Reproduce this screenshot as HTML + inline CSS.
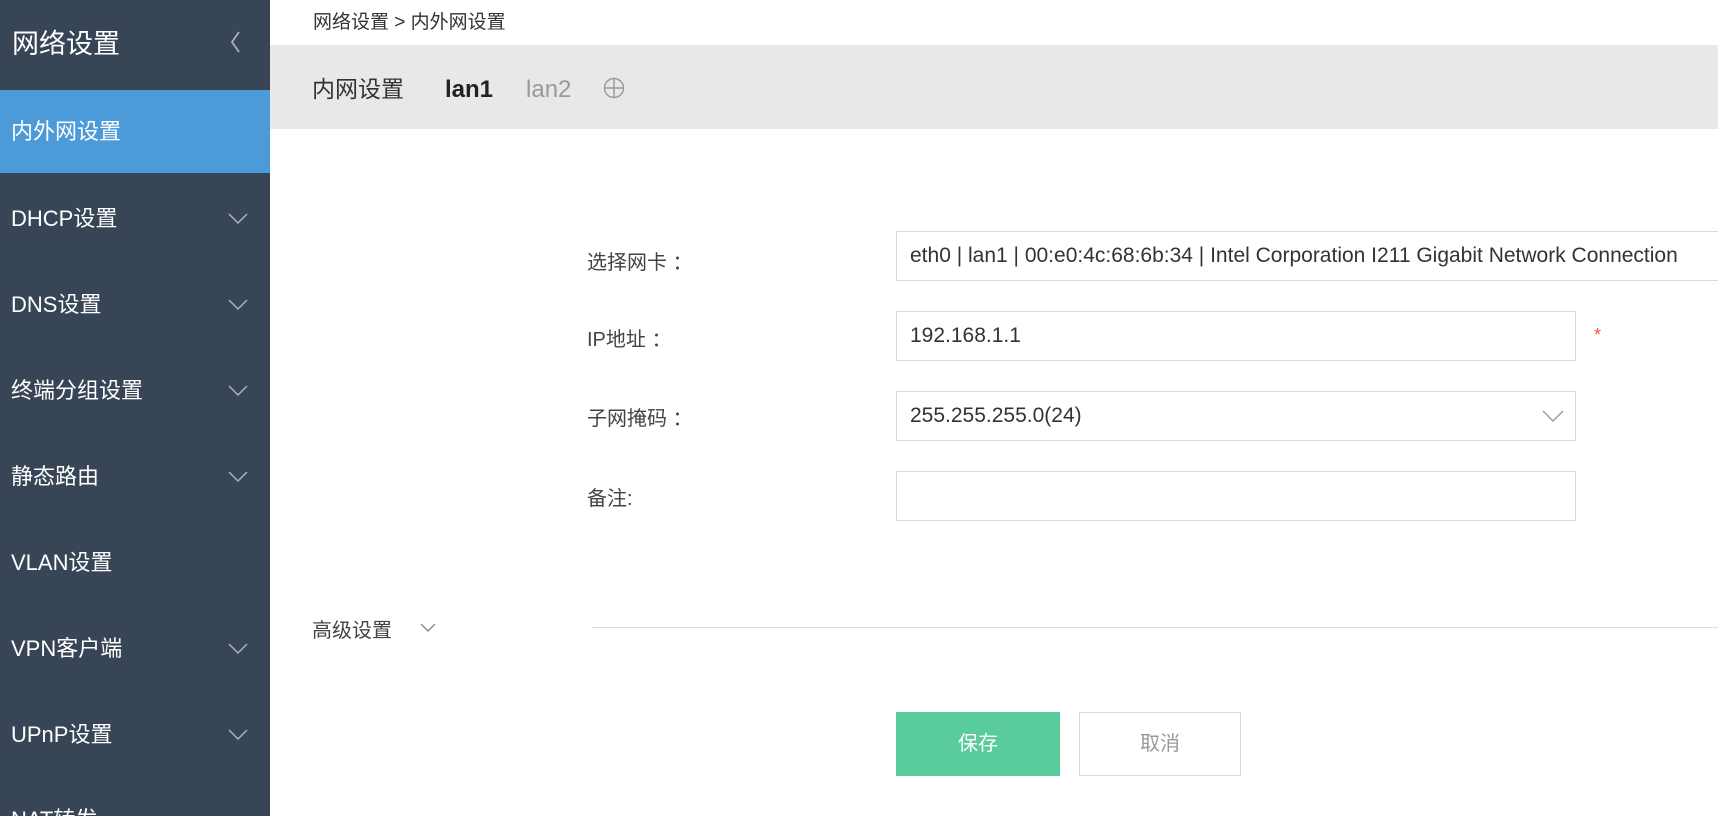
<!DOCTYPE html>
<html><head><meta charset="utf-8"><style>
*{margin:0;padding:0;box-sizing:border-box}
body{width:1718px;height:816px;overflow:hidden;background:#fff;font-family:"Liberation Sans","Noto Sans CJK SC",sans-serif;position:relative;color:#333}
.sb{position:absolute;left:0;top:0;width:270px;height:816px;background:#374556;color:#fff}
.hd{position:absolute;left:12px;top:22px;font-size:27px}
.act{position:absolute;left:0;top:90px;width:270px;height:83px;background:#4c9bd8}
.it{position:absolute;left:11px;font-size:22px;line-height:30px}
.chev{position:absolute;left:228px;width:20px;height:12px}
.abs{position:absolute}
.lbl{position:absolute;left:587px;font-size:20px;color:#444}
.inp{position:absolute;left:896px;width:680px;height:50px;border:1px solid #d9d9d9;font-size:21px;line-height:48px;padding-left:13px;color:#333;white-space:nowrap;overflow:hidden}
.title{position:absolute;left:312px;top:70px;display:flex;align-items:baseline;height:34px}
</style></head><body>
<div class="sb">
<div class="hd">网络设置</div>
<svg class="abs" style="left:229px;top:30px" width="12" height="24"><path d="M10 2L3 12L10 22" stroke="#aab3be" stroke-width="1.8" fill="none"/></svg>
<div class="act"></div>
<div class="it" style="top:117px">内外网设置</div>
<div class="it" style="top:204px">DHCP设置</div>
<div class="it" style="top:290px">DNS设置</div>
<div class="it" style="top:376px">终端分组设置</div>
<div class="it" style="top:462px">静态路由</div>
<div class="it" style="top:548px">VLAN设置</div>
<div class="it" style="top:634px">VPN客户端</div>
<div class="it" style="top:720px">UPnP设置</div>
<div class="it" style="top:805px">NAT转发</div>
<svg class="chev" style="top:213px" viewBox="0 0 20 12"><path d="M1 1L10 10L19 1" stroke="#aab3be" stroke-width="1.5" fill="none"/></svg>
<svg class="chev" style="top:299px" viewBox="0 0 20 12"><path d="M1 1L10 10L19 1" stroke="#aab3be" stroke-width="1.5" fill="none"/></svg>
<svg class="chev" style="top:385px" viewBox="0 0 20 12"><path d="M1 1L10 10L19 1" stroke="#aab3be" stroke-width="1.5" fill="none"/></svg>
<svg class="chev" style="top:471px" viewBox="0 0 20 12"><path d="M1 1L10 10L19 1" stroke="#aab3be" stroke-width="1.5" fill="none"/></svg>
<svg class="chev" style="top:643px" viewBox="0 0 20 12"><path d="M1 1L10 10L19 1" stroke="#aab3be" stroke-width="1.5" fill="none"/></svg>
<svg class="chev" style="top:729px" viewBox="0 0 20 12"><path d="M1 1L10 10L19 1" stroke="#aab3be" stroke-width="1.5" fill="none"/></svg>
</div>
<div class="abs" style="left:313px;top:7px;font-size:19px;color:#333">网络设置 &gt; 内外网设置</div>
<div class="abs" style="left:270px;top:45px;width:1448px;height:84px;background:#e8e8e8"></div>
<div class="title">
<span style="font-size:23px;color:#333">内网设置</span>
<span style="font-size:24px;font-weight:bold;color:#222;margin-left:41px">lan1</span>
<span style="font-size:24px;color:#999;margin-left:33px">lan2</span>
</div>
<svg class="abs" style="left:603px;top:77px" width="22" height="22"><circle cx="11" cy="11" r="9.5" stroke="#999" stroke-width="1.4" fill="none"/><path d="M11 1.5V20.5M1.5 11H20.5" stroke="#999" stroke-width="1.4"/></svg>
<div class="lbl" style="top:246px">选择网卡 ：</div>
<div class="lbl" style="top:323px">IP地址 ：</div>
<div class="lbl" style="top:402px">子网掩码 ：</div>
<div class="lbl" style="top:482px">备注:</div>
<div class="inp" style="top:231px;width:830px">eth0 | lan1 | 00:e0:4c:68:6b:34 | Intel Corporation I211 Gigabit Network Connection</div>
<div class="inp" style="top:311px">192.168.1.1</div>
<div class="abs" style="left:1594px;top:325px;color:#e55;font-size:18px">*</div>
<div class="inp" style="top:391px">255.255.255.0(24)</div>
<svg class="abs" style="left:1542px;top:410px" width="22" height="13"><path d="M1 1L11 11L21 1" stroke="#999" stroke-width="1.4" fill="none"/></svg>
<div class="inp" style="top:471px"></div>
<div class="abs" style="left:312px;top:614px;font-size:20px;color:#444">高级设置</div>
<svg class="abs" style="left:420px;top:623px" width="16" height="10"><path d="M1 1L8 8L15 1" stroke="#888" stroke-width="1.4" fill="none"/></svg>
<div class="abs" style="left:592px;top:627px;width:1126px;height:1px;background:#ddd"></div>
<div class="abs" style="left:896px;top:712px;width:164px;height:64px;background:#5acb9b;color:#fff;font-size:20px;text-align:center;line-height:64px">保存</div>
<div class="abs" style="left:1079px;top:712px;width:162px;height:64px;border:1px solid #d9d9d9;color:#999;font-size:20px;text-align:center;line-height:62px">取消</div>
</body></html>
